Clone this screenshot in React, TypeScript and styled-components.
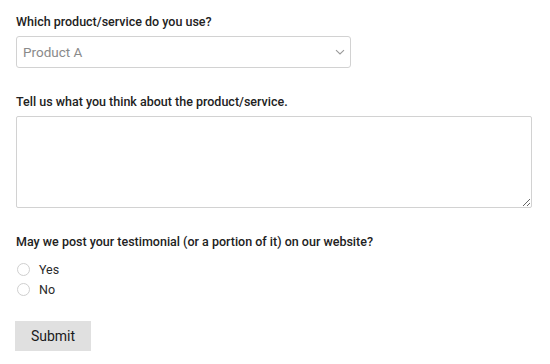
import styled, { createGlobalStyle } from "styled-components";

const Global = createGlobalStyle`
  body {
    margin: 0;
    background: #fff;
    font-family: Roboto, "Liberation Sans", Arial, sans-serif;
    color: #1f1f1f;
  }
`;

const Form = styled.form`
  padding: 13px 16px 0;
  display: flex;
  flex-direction: column;
`;

const Field = styled.div`
  display: flex;
  flex-direction: column;
  margin-bottom: 25px;
`;

const Label = styled.label`
  font-size: 12.5px;
  font-weight: 500;
  line-height: 18px;
  margin-bottom: 5px;
  color: #222;
`;

const SelectWrap = styled.div`
  position: relative;
  width: 335px;
`;

const Select = styled.select`
  appearance: none;
  width: 100%;
  height: 32px;
  box-sizing: border-box;
  border: 1px solid #d2d2d2;
  border-radius: 3px;
  background: #fff;
  padding: 0 6px;
  font-family: Roboto, "Liberation Sans", Arial, sans-serif;
  font-size: 13.5px;
  color: #8a8a8a;
  outline: none;
`;

const Chevron = styled.svg`
  position: absolute;
  right: 6px;
  top: 11px;
  pointer-events: none;
`;

const TextArea = styled.textarea`
  width: 516px;
  height: 92px;
  box-sizing: border-box;
  border: 1px solid #d2d2d2;
  border-radius: 2px;
  margin: 0;
  font-family: Roboto, "Liberation Sans", Arial, sans-serif;
  font-size: 14px;
  outline: none;
`;

const RadioList = styled.div`
  display: flex;
  flex-direction: column;
  margin-top: 3px;
`;

const RadioRow = styled.label`
  display: flex;
  align-items: center;
  height: 20px;
  gap: 9px;
  font-size: 12.5px;
  color: #2a2a2a;
  padding-left: 1px;
`;

const Radio = styled.input`
  appearance: none;
  margin: 0;
  width: 13px;
  height: 13px;
  border: 1px solid #cfcfcf;
  border-radius: 50%;
  background: #fff;
`;

const Button = styled.button`
  align-self: flex-start;
  width: 76px;
  height: 30px;
  margin-left: -1px;
  border: none;
  border-radius: 0;
  background: #e0e0e0;
  font-family: Roboto, "Liberation Sans", Arial, sans-serif;
  font-size: 14px;
  color: #1a1a1a;
  margin-top: -3px;
`;

export default function App() {
  return (
    <>
      <Global />
      <Form onSubmit={(e) => e.preventDefault()}>
        <Field>
          <Label>Which product/service do you use?</Label>
          <SelectWrap>
            <Select defaultValue="a">
              <option value="a">Product A</option>
              <option value="b">Product B</option>
            </Select>
            <Chevron width="10" height="10" viewBox="0 0 10 10">
              <path d="M1 3.2 L5 7 L9 3.2" fill="none" stroke="#9a9a9a" strokeWidth="1.1" />
            </Chevron>
          </SelectWrap>
        </Field>
        <Field>
          <Label>Tell us what you think about the product/service.</Label>
          <TextArea />
        </Field>
        <Field>
          <Label>May we post your testimonial (or a portion of it) on our website?</Label>
          <RadioList>
            <RadioRow>
              <Radio type="radio" name="post" />
              Yes
            </RadioRow>
            <RadioRow>
              <Radio type="radio" name="post" />
              No
            </RadioRow>
          </RadioList>
        </Field>
        <Button type="submit">Submit</Button>
      </Form>
    </>
  );
}
